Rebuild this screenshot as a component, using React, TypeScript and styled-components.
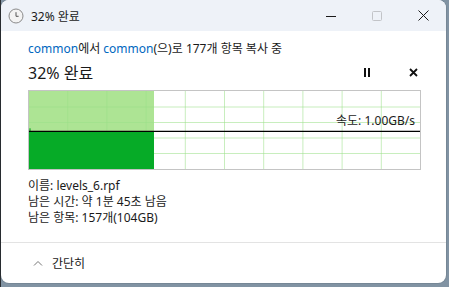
import React from 'react';
import styled, { createGlobalStyle } from 'styled-components';

const GlobalStyle = createGlobalStyle`
  html, body {
    margin: 0;
    padding: 0;
    width: 449px;
    height: 287px;
    overflow: hidden;
    background: linear-gradient(90deg, #2b2f33 0px, #2b2f33 1px, #8193a3 1px);
    font-family: "Noto Sans", "Noto Sans CJK KR", sans-serif;
  }
`;

const Window = styled.div`
  width: 445px;
  height: 283px;
  margin-left: 1px;
  background: #ffffff;
  border-radius: 8px;
  overflow: hidden;
  display: flex;
  flex-direction: column;
  box-shadow: 0 0 0 1px rgba(0, 0, 0, 0.08);
`;

const TitleBar = styled.div`
  height: 31px;
  flex: none;
  display: flex;
  align-items: center;
  background: #eef2f8;
  padding-left: 7px;
`;

const TitleText = styled.span`
  margin-left: 7px;
  font-size: 12px;
  color: #1a1a1a;
  flex: 1;
`;

const CaptionButton = styled.div`
  width: 46px;
  height: 31px;
  display: flex;
  align-items: center;
  justify-content: center;
`;

const Content = styled.div`
  padding: 10px 25px 0 27px;
  display: flex;
  flex-direction: column;
`;

const Subtitle = styled.div`
  font-size: 12px;
  line-height: 16px;
  color: #1a1a1a;
  white-space: nowrap;
`;

const Link = styled.span`
  color: #0067c0;
`;

const HeadRow = styled.div`
  margin-top: 3px;
  height: 24px;
  display: flex;
  align-items: center;
`;

const Percent = styled.div`
  flex: 1;
  font-size: 16px;
  color: #1a1a1a;
`;

const IconButton = styled.div<{ $gap?: number }>`
  width: 16px;
  height: 24px;
  display: flex;
  align-items: center;
  justify-content: center;
  margin-left: ${({ $gap }) => $gap ?? 0}px;
`;

const Graph = styled.div`
  position: relative;
  margin-top: 6px;
  width: 393px;
  height: 80px;
`;

const SpeedLabel = styled.span`
  position: absolute;
  right: 6px;
  top: 24px;
  font-size: 12px;
  line-height: 14px;
  color: #1a1a1a;
`;

const Info = styled.div`
  margin-top: 8px;
  font-size: 12px;
  line-height: 16px;
  color: #1a1a1a;
`;

const Divider = styled.div`
  margin-top: 16px;
  height: 1px;
  background: #e3e3e3;
`;

const Footer = styled.div`
  flex: 1;
  display: flex;
  align-items: center;
  padding-left: 32px;
  font-size: 12px;
  color: #1a1a1a;
  gap: 9px;
`;

const W = 393;
const H = 80;
const fillW = 125;
const lineY = 41.3;

const ProgressGraph: React.FC = () => {
  const cols = Array.from({ length: 9 }, (_, i) => ((i + 1) * (W - 1)) / 10 + 0.5);
  const rows = Array.from({ length: 4 }, (_, i) => 17 + i * 15.5);
  return (
    <svg width={W} height={H} viewBox={`0 0 ${W} ${H}`} style={{ display: 'block' }}>
      <rect x={0.5} y={0.5} width={W - 1} height={H - 1} fill="#fff" stroke="#c4c4c4" />
      <rect x={1} y={1} width={fillW} height={lineY - 1} fill="#ade494" />
      {cols.map((x) => (
        <line key={'c' + x} x1={x} x2={x} y1={1} y2={H - 1} stroke="#9be088" strokeOpacity={0.55} />
      ))}
      {rows.map((y) => (
        <line key={'r' + y} x1={1} x2={W - 1} y1={y} y2={y} stroke="#9be088" strokeOpacity={0.55} />
      ))}
      <rect x={1} y={lineY} width={fillW} height={H - 1 - lineY} fill="#06ab27" />
      <rect x={1} y={lineY - 3} width={2} height={3} fill="#4cc050" />
      <line x1={1} x2={W - 1} y1={lineY} y2={lineY} stroke="#000" strokeWidth={1.3} />
    </svg>
  );
};

const App: React.FC = () => {
  return (
    <>
      <GlobalStyle />
      <Window>
        <TitleBar>
          <svg width="16" height="16" viewBox="0 0 16 16">
            <circle cx="8" cy="8" r="7" fill="#f3f3f3" stroke="#8a8a8a" strokeWidth="1" />
            <path d="M8 4.2 V8.3 H10.6" fill="none" stroke="#555" strokeWidth="1" />
          </svg>
          <TitleText>32% 완료</TitleText>
          <CaptionButton>
            <svg width="10" height="10" viewBox="0 0 10 10">
              <line x1="0" x2="10" y1="5.5" y2="5.5" stroke="#1a1a1a" strokeWidth="1" />
            </svg>
          </CaptionButton>
          <CaptionButton>
            <svg width="10" height="10" viewBox="0 0 10 10">
              <rect x="0.5" y="0.5" width="9" height="9" rx="1" fill="none" stroke="#c2c4c8" />
            </svg>
          </CaptionButton>
          <CaptionButton>
            <svg width="11" height="11" viewBox="0 0 11 11">
              <path d="M0.5 0.5 L10.5 10.5 M10.5 0.5 L0.5 10.5" stroke="#1a1a1a" strokeWidth="1" />
            </svg>
          </CaptionButton>
        </TitleBar>
        <Content>
          <Subtitle>
            <Link>common</Link>에서 <Link>common</Link>(으)로 177개 항목 복사 중
          </Subtitle>
          <HeadRow>
            <Percent>32% 완료</Percent>
            <IconButton>
              <svg width="8" height="9" viewBox="0 0 8 9">
                <rect x="1" y="0" width="2" height="9" fill="#111" />
                <rect x="5" y="0" width="2" height="9" fill="#111" />
              </svg>
            </IconButton>
            <IconButton $gap={30}>
              <svg width="9" height="9" viewBox="0 0 9 9">
                <path d="M1 1 L8 8 M8 1 L1 8" stroke="#111" strokeWidth="1.8" />
              </svg>
            </IconButton>
          </HeadRow>
          <Graph>
            <ProgressGraph />
            <SpeedLabel>속도: 1.00GB/s</SpeedLabel>
          </Graph>
          <Info>
            <div>이름: levels_6.rpf</div>
            <div>남은 시간: 약 1분 45초 남음</div>
            <div>남은 항목: 157개(104GB)</div>
          </Info>
        </Content>
        <Divider />
        <Footer>
          <svg width="10" height="6" viewBox="0 0 10 6">
            <path d="M1 5.5 L5 1.5 L9 5.5" fill="none" stroke="#777" strokeWidth="1" />
          </svg>
          <span>간단히</span>
        </Footer>
      </Window>
    </>
  );
};

export default App;
